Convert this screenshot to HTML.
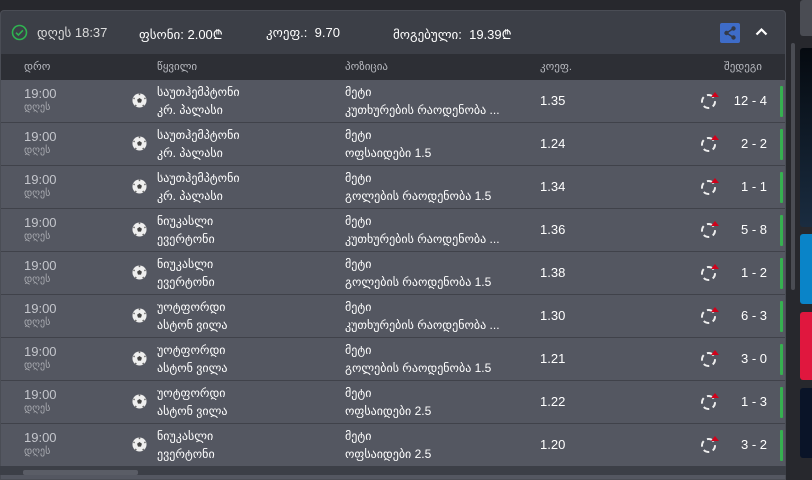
<!DOCTYPE html>
<html><head><meta charset="utf-8"><style>
*{margin:0;padding:0;box-sizing:border-box}
body{width:812px;height:475px;background:#27282d;overflow:hidden;position:relative;font-family:"Liberation Sans","DejaVu Sans",sans-serif;color:#fff}
.panel{position:absolute;left:0;top:10px;width:786px;height:470px;background:#545761;border:1px solid #4a4d55;border-radius:4px 4px 0 0;overflow:hidden}
.hdr{height:43px;background:#3c3f47;position:relative;font-size:13px}
.hdr span{position:absolute;top:14px}
.cols{height:26px;background:#2d2f35;position:relative;font-size:11px;color:#b8bac0}
.cols span{position:absolute;top:6px}
.row{height:43px;border-bottom:1px solid #40424a;position:relative;font-size:12px}
.row .t{position:absolute;left:23px;top:7px;color:#c4c6cc;font-size:13px;line-height:14px}
.row .t small{display:block;font-size:10px;color:#a8aab0}
.row .ball{position:absolute;left:131px;top:13px;width:15px;height:15px}
.row .m{position:absolute;left:156px;top:3px;line-height:18px}
.row .p{position:absolute;left:344px;top:3px;line-height:18px}
.row .k{position:absolute;left:539px;top:13px;font-size:13px}
.row .ic{position:absolute;left:700px;top:14px;width:15px;height:15px;border:2px dashed #eee;border-radius:50%}
.row .ic:after{content:"";position:absolute;right:-5px;top:-4px;border:4px solid transparent;border-bottom:5px solid #d0021b;border-top:0}
.row .s{position:absolute;right:18px;top:13px;font-size:13px}
.row .g{position:absolute;left:779px;top:6px;width:3px;height:31px;background:#36b150;border-radius:1px}
</style></head><body>
<svg width="0" height="0" style="position:absolute"><defs><symbol id="b" viewBox="0 0 16 16"><circle cx="8" cy="8" r="7.5" fill="#eee"/><path d="M8 5.3l2.6 1.9-1 3H6.4l-1-3z" fill="#444"/><path d="M8 .6v1.6M14.5 5.5l-1.4.6M12.4 14l-.9-1.3M3.6 14l.9-1.3M1.5 5.5l1.4.6" stroke="#666" stroke-width="1.6"/></symbol></defs></svg>
<div class="panel">
<div class="hdr">
<svg style="position:absolute;left:10px;top:13px" width="17" height="17" viewBox="0 0 17 17"><circle cx="8.5" cy="8.5" r="7" fill="none" stroke="#2fb351" stroke-width="1.6"/><path d="M5 8.7l2.4 2.3 4.5-4.7" fill="none" stroke="#2fb351" stroke-width="1.6"/></svg>
<span style="left:36px;color:#ddd">დღეს 18:37</span>
<span style="left:138px">ფსონი: 2.00₾</span>
<span style="left:265px">კოეფ.:&nbsp; 9.70</span>
<span style="left:392px">მოგებული:&nbsp; 19.39₾</span>
<div style="position:absolute;left:719px;top:12px;width:20px;height:20px;background:#3e6cc8;border-radius:2px"><svg width="20" height="20" viewBox="0 0 20 20"><circle cx="13.5" cy="5.5" r="2.2" fill="#333a4a"/><circle cx="6.5" cy="10" r="2.2" fill="#333a4a"/><circle cx="13.5" cy="14.5" r="2.2" fill="#333a4a"/><path d="M13.5 5.5L6.5 10l7 4.5" stroke="#333a4a" stroke-width="1.4" fill="none"/></svg></div>
<svg style="position:absolute;left:754px;top:16px" width="13" height="9" viewBox="0 0 13 9"><path d="M1.5 7.5l5-5 5 5" stroke="#fff" stroke-width="2.2" fill="none"/></svg>
</div>
<div class="cols"><span style="left:23px">დრო</span><span style="left:156px">წყვილი</span><span style="left:344px">პოზიცია</span><span style="left:539px">კოეფ.</span><span style="left:723px">შედეგი</span></div>
<div class="row"><div class="t">19:00<small>დღეს</small></div><svg class="ball"><use href="#b"/></svg><div class="m">საუთჰემპტონი<br>კრ. პალასი</div><div class="p">მეტი<br>კუთხურების რაოდენობა ...</div><div class="k">1.35</div><div class="ic"></div><div class="s">12 - 4</div><div class="g"></div></div>
<div class="row"><div class="t">19:00<small>დღეს</small></div><svg class="ball"><use href="#b"/></svg><div class="m">საუთჰემპტონი<br>კრ. პალასი</div><div class="p">მეტი<br>ოფსაიდები 1.5</div><div class="k">1.24</div><div class="ic"></div><div class="s">2 - 2</div><div class="g"></div></div>
<div class="row"><div class="t">19:00<small>დღეს</small></div><svg class="ball"><use href="#b"/></svg><div class="m">საუთჰემპტონი<br>კრ. პალასი</div><div class="p">მეტი<br>გოლების რაოდენობა 1.5</div><div class="k">1.34</div><div class="ic"></div><div class="s">1 - 1</div><div class="g"></div></div>
<div class="row"><div class="t">19:00<small>დღეს</small></div><svg class="ball"><use href="#b"/></svg><div class="m">ნიუკასლი<br>ევერტონი</div><div class="p">მეტი<br>კუთხურების რაოდენობა ...</div><div class="k">1.36</div><div class="ic"></div><div class="s">5 - 8</div><div class="g"></div></div>
<div class="row"><div class="t">19:00<small>დღეს</small></div><svg class="ball"><use href="#b"/></svg><div class="m">ნიუკასლი<br>ევერტონი</div><div class="p">მეტი<br>გოლების რაოდენობა 1.5</div><div class="k">1.38</div><div class="ic"></div><div class="s">1 - 2</div><div class="g"></div></div>
<div class="row"><div class="t">19:00<small>დღეს</small></div><svg class="ball"><use href="#b"/></svg><div class="m">უოტფორდი<br>ასტონ ვილა</div><div class="p">მეტი<br>კუთხურების რაოდენობა ...</div><div class="k">1.30</div><div class="ic"></div><div class="s">6 - 3</div><div class="g"></div></div>
<div class="row"><div class="t">19:00<small>დღეს</small></div><svg class="ball"><use href="#b"/></svg><div class="m">უოტფორდი<br>ასტონ ვილა</div><div class="p">მეტი<br>გოლების რაოდენობა 1.5</div><div class="k">1.21</div><div class="ic"></div><div class="s">3 - 0</div><div class="g"></div></div>
<div class="row"><div class="t">19:00<small>დღეს</small></div><svg class="ball"><use href="#b"/></svg><div class="m">უოტფორდი<br>ასტონ ვილა</div><div class="p">მეტი<br>ოფსაიდები 2.5</div><div class="k">1.22</div><div class="ic"></div><div class="s">1 - 3</div><div class="g"></div></div>
<div class="row"><div class="t">19:00<small>დღეს</small></div><svg class="ball"><use href="#b"/></svg><div class="m">ნიუკასლი<br>ევერტონი</div><div class="p">მეტი<br>ოფსაიდები 2.5</div><div class="k">1.20</div><div class="ic"></div><div class="s">3 - 2</div><div class="g"></div></div>
</div>
<div style="position:absolute;left:0;top:466px;width:786px;height:9px;background:#3c3f47"></div>
<div style="position:absolute;left:23px;top:470px;width:115px;height:5px;background:#5a5d66;border-radius:2px"></div>
<div style="position:absolute;left:791px;top:43px;width:4px;height:247px;background:#4a4c53;border-radius:2px"></div>
<div style="position:absolute;left:800px;top:0;width:12px;height:36px;background:#4a4c53;border-radius:3px 0 0 3px"></div>
<div style="position:absolute;left:800px;top:48px;width:12px;height:179px;background:linear-gradient(#050a10,#1a2c40);border-radius:3px 0 0 3px"></div>
<div style="position:absolute;left:800px;top:234px;width:12px;height:70px;background:#0a84c8;border-radius:3px 0 0 3px"></div>
<div style="position:absolute;left:800px;top:312px;width:12px;height:68px;background:#e0173e;border-radius:3px 0 0 3px"></div>
<div style="position:absolute;left:800px;top:388px;width:12px;height:70px;background:#0a1428;border-radius:3px 0 0 3px"></div>
</body></html>
